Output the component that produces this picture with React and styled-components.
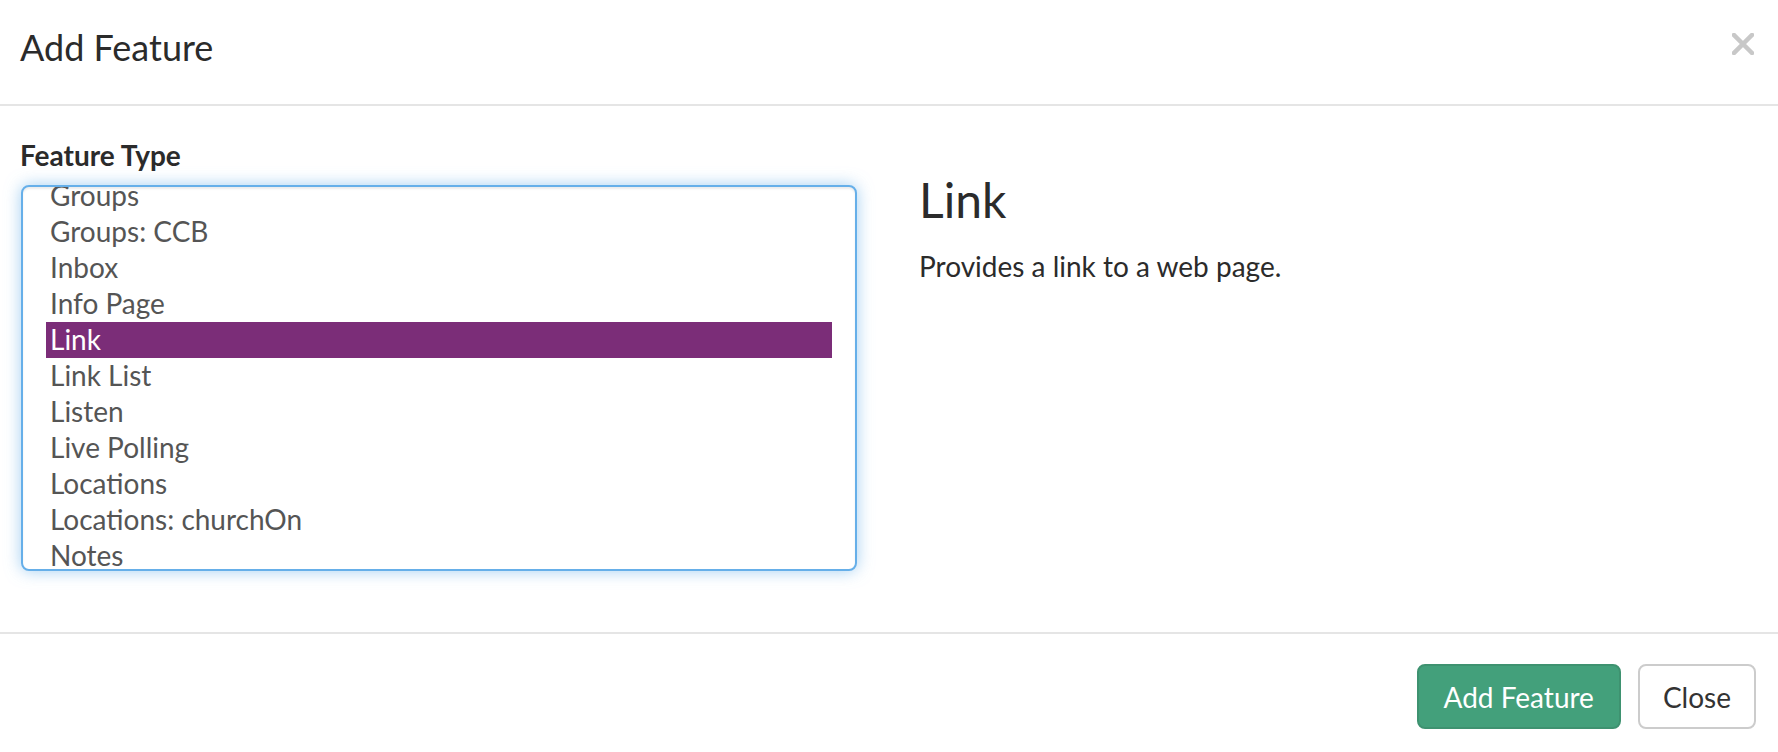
import React, { useLayoutEffect, useRef } from "react";
import styled, { createGlobalStyle } from "styled-components";

const GlobalStyle = createGlobalStyle`
  html, body {
    margin: 0;
    padding: 0;
    background: #fff;
  }
  body {
    font-family: Lato, "Open Sans", "Liberation Sans", sans-serif;
    color: #333;
  }
  * {
    box-sizing: border-box;
  }
`;

const Modal = styled.div`
  width: 1778px;
  height: 752px;
  display: flex;
  flex-direction: column;
  background: #fff;
  overflow: hidden;
`;

const Header = styled.div`
  height: 106px;
  display: flex;
  align-items: flex-start;
  justify-content: space-between;
  padding: 26px 24px 0 20px;
  border-bottom: 2px solid #e5e5e5;
`;

const Title = styled.h4`
  margin: 0;
  font-size: 36px;
  font-weight: 400;
  line-height: 1.2;
  color: #2b2b2b;
`;

const CloseX = styled.button`
  border: none;
  background: transparent;
  padding: 0;
  margin-top: 7px;
  width: 22px;
  height: 22px;
  cursor: pointer;
  display: flex;
`;

const Body = styled.div`
  height: 528px;
  padding: 29px 20px 0 21px;
  display: grid;
  grid-template-columns: 836px 1fr;
  column-gap: 62px;
  border-bottom: 2px solid #e5e5e5;
`;

const Field = styled.div`
  display: flex;
  flex-direction: column;
`;

const Label = styled.label`
  font-size: 28px;
  font-weight: 700;
  line-height: 40px;
  color: #2b2b2b;
  margin-bottom: 10px;
  margin-left: -1px;
`;

const ListBox = styled.div`
  height: 386px;
  border: 2px solid #66afe9;
  border-radius: 8px;
  box-shadow: inset 0 2px 2px rgba(0, 0, 0, 0.075), 0 0 16px rgba(102, 175, 233, 0.6);
  overflow-y: auto;
  scrollbar-width: none;
  padding: 0 23px;
  background: #fff;
  &::-webkit-scrollbar {
    display: none;
  }
`;

const Option = styled.div`
  height: 36px;
  line-height: 35px;
  padding-left: 4px;
  font-size: 28px;
  white-space: nowrap;
  color: ${(p) => (p.$selected ? "#fff" : "#555")};
  background: ${(p) => (p.$selected ? "#7b2d78" : "transparent")};
`;

const Details = styled.div`
  display: flex;
  flex-direction: column;
`;

const DetailTitle = styled.h3`
  margin: 39px 0 20px;
  font-size: 48px;
  font-weight: 400;
  line-height: 1.1;
  color: #2b2b2b;
`;

const DetailText = styled.p`
  margin: 0;
  font-size: 28px;
  line-height: 38px;
  color: #2b2b2b;
`;

const Footer = styled.div`
  display: flex;
  justify-content: flex-end;
  gap: 17px;
  padding: 30px 22px 0 0;
`;

const Button = styled.button`
  height: 65px;
  padding: 0 ${(p) => (p.$primary ? "25px" : "23px")};
  font-family: inherit;
  font-size: 28px;
  line-height: 1;
  border-radius: 8px;
  border: 2px solid ${(p) => (p.$primary ? "#3e9270" : "#ccc")};
  background: ${(p) => (p.$primary ? "#43a07b" : "#fff")};
  color: ${(p) => (p.$primary ? "#fff" : "#333")};
  cursor: pointer;
`;

const features = [
  "Audio",
  "Bible",
  "Blog",
  "Calendar",
  "Connect Card",
  "Events",
  "Forms",
  "Giving",
  "Groups",
  "Groups: CCB",
  "Inbox",
  "Info Page",
  "Link",
  "Link List",
  "Listen",
  "Live Polling",
  "Locations",
  "Locations: churchOn",
  "Notes",
  "Prayer",
  "Sermons",
  "Social",
  "Video",
];

const App = () => {
  const listRef = useRef(null);
  const selected = "Link";

  useLayoutEffect(() => {
    // scroll so "Groups" sits just under the top edge
    const idx = features.indexOf("Groups");
    if (listRef.current) listRef.current.scrollTop = idx * 36 + 9;
  }, []);

  return (
    <>
      <GlobalStyle />
      <Modal>
        <Header>
          <Title>Add Feature</Title>
          <CloseX aria-label="Close">
            <svg width="22" height="22" viewBox="0 0 22 22">
              <path d="M2 2 L20 20 M20 2 L2 20" stroke="#c8c8c8" strokeWidth="4.5" strokeLinecap="square" />
            </svg>
          </CloseX>
        </Header>
        <Body>
          <Field>
            <Label>Feature Type</Label>
            <ListBox ref={listRef}>
              {features.map((f) => (
                <Option key={f} $selected={f === selected}>
                  {f}
                </Option>
              ))}
            </ListBox>
          </Field>
          <Details>
            <DetailTitle>Link</DetailTitle>
            <DetailText>Provides a link to a web page.</DetailText>
          </Details>
        </Body>
        <Footer>
          <Button $primary>Add Feature</Button>
          <Button>Close</Button>
        </Footer>
      </Modal>
    </>
  );
};

export default App;
